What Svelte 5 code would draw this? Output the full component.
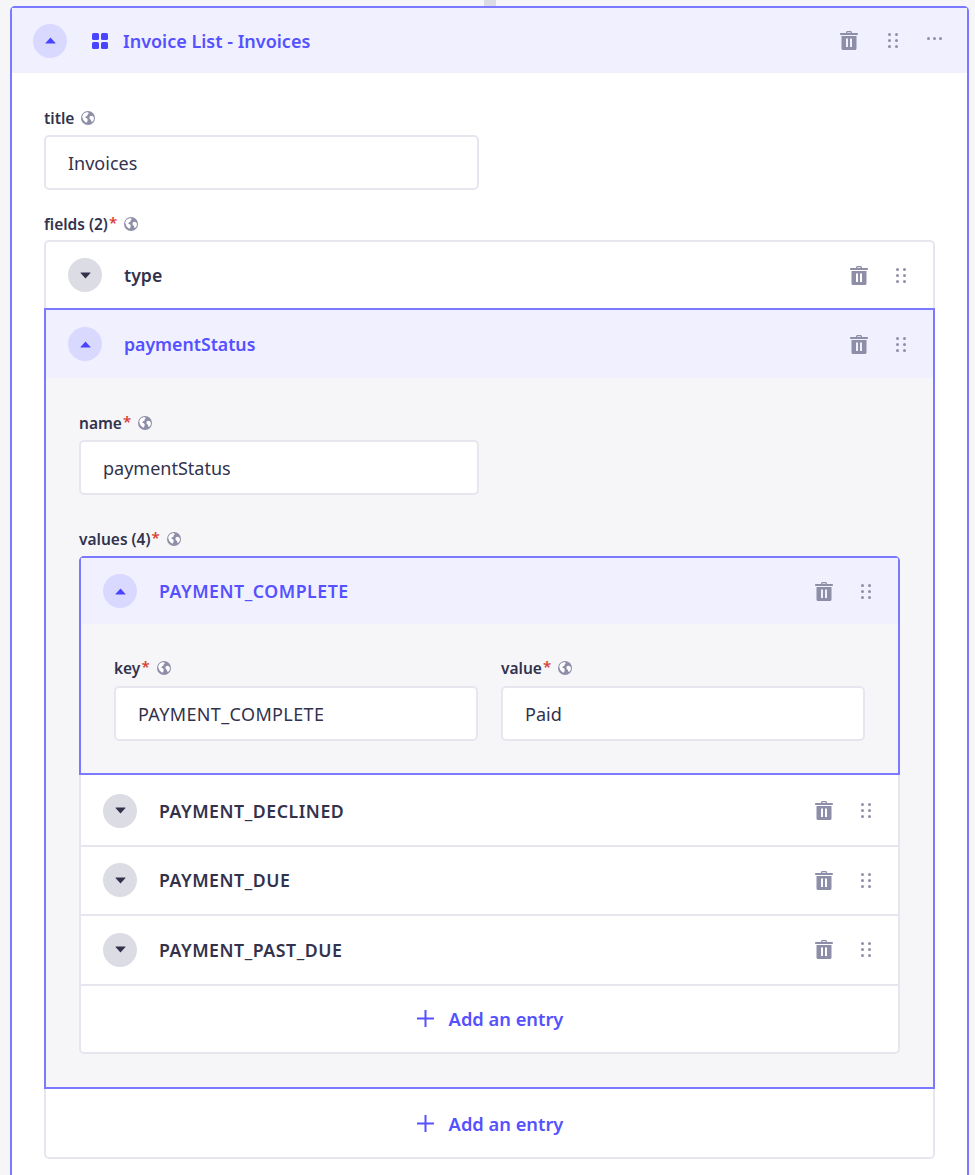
<script>
    let values = ['PAYMENT_DECLINED', 'PAYMENT_DUE', 'PAYMENT_PAST_DUE'];

    // enum keys read wider in the reference font
    const isCaps = (s) => s === s.toUpperCase();
</script>

{#snippet globe()}
    <svg class="globe" viewBox="0 0 24 24">
        <circle cx="12" cy="12" r="12" fill="#8e8ea9"/>
        <path fill="#fff" d="M4 5c2-2 5-3.2 8-3l1.500 2-2 1.500-.5 2.500-3 1.500-.5 2 2.500 1 1.500 2-.5 3.500-2 2C6 18.500 3.500 16 3 13l-1-3c.3-1.800 1-3.500 2-5zM15 9l4-1 3 2.500c.3 2.500-.3 5-1.500 7L18 19l-1-3.500-2.500-2.500z"/>
    </svg>
{/snippet}

{#snippet caret(open)}
    <span class="toggle" class:open>
        <svg width="11" height="7" viewBox="0 0 11 7">
            {#if open}
                <path d="M5.500 0.500 L10.500 6 Q10.700 6.500 10 6.500 H1 Q0.300 6.500 0.500 6 Z"/>
            {:else}
                <path d="M5.500 6.500 L10.500 1 Q10.700 0.500 10 0.500 H1 Q0.300 0.500 0.500 1 Z"/>
            {/if}
        </svg>
    </span>
{/snippet}

{#snippet trash()}
    <svg class="trash" width="18" height="19" viewBox="0 0 18 19">
        <path fill-rule="evenodd" d="M6 1.500C6 .7 6.700 0 7.500 0h3c.8 0 1.500.7 1.500 1.500V2h5c.6 0 1 .4 1 1s-.4 1-1 1H1c-.6 0-1-.4-1-1s.4-1 1-1h5zM7.300 2h3.400v-.7H7.300zM1.500 5h15v12.500c0 .8-.7 1.500-1.500 1.500H3c-.8 0-1.500-.7-1.500-1.500zM6 7.500v8.500h2V7.500zM10 7.500v8.500h2V7.500z"/>
    </svg>
{/snippet}

{#snippet drag()}
    <svg class="drag" width="10" height="15" viewBox="0 0 10 15">
        {#each [1.500, 7.500, 13.500] as y}
            <circle cx="1.500" cy={y} r="1.500"/>
            <circle cx="8.500" cy={y} r="1.500"/>
        {/each}
    </svg>
{/snippet}

{#snippet actions()}
    <span class="actions">
        {@render trash()}
        {@render drag()}
    </span>
{/snippet}

{#snippet label(text, required)}
    <div class="label">
        <span>{text}</span>{#if required}<span class="star">*</span>{/if}
        {@render globe()}
    </div>
{/snippet}

{#snippet field(name, value, required)}
    <div class="field">
        {@render label(name, required)}
        <div class="input" class:caps={isCaps(value)}>{value}</div>
    </div>
{/snippet}

{#snippet addEntry()}
    <div class="add">
        <svg width="19" height="19" viewBox="0 0 19 19">
            <path d="M9.500 1v17M1 9.500h17" stroke="#5551ff" stroke-width="2" fill="none"/>
        </svg>
        <span>Add an entry</span>
    </div>
{/snippet}

<div class="page">
    <div class="connector"></div>
    <section class="card">
        <header class="card-head">
            {@render caret(true)}
            <svg class="blocks" width="16" height="16" viewBox="0 0 16 16">
                <rect x="0" y="0" width="7" height="7" rx="1.500"/>
                <rect x="9" y="0" width="7" height="7" rx="1.500"/>
                <rect x="0" y="9" width="7" height="7" rx="1.500"/>
                <rect x="9" y="9" width="7" height="7" rx="1.500"/>
            </svg>
            <span class="card-title">Invoice List - Invoices</span>
            <span class="actions card-actions">
                {@render trash()}
                {@render drag()}
                <svg class="more" width="15" height="3" viewBox="0 0 15 3">
                    <circle cx="1.500" cy="1.500" r="1.500"/>
                    <circle cx="7.500" cy="1.500" r="1.500"/>
                    <circle cx="13.500" cy="1.500" r="1.500"/>
                </svg>
            </span>
        </header>

        <div class="card-body">
            <div class="cols">
                {@render field('title', 'Invoices', false)}
            </div>

            <div class="group">
                {@render label('fields (2)', true)}
                <div class="list outer">
                    <div class="row">
                        {@render caret(false)}
                        <span class="row-name">type</span>
                        {@render actions()}
                    </div>

                    <div class="active">
                        <div class="row head">
                            {@render caret(true)}
                            <span class="row-name">paymentStatus</span>
                            {@render actions()}
                        </div>
                        <div class="active-body">
                            <div class="cols">
                                {@render field('name', 'paymentStatus', true)}
                            </div>
                            <div class="group nested">
                                {@render label('values (4)', true)}
                                <div class="list inner">
                                    <div class="active first">
                                        <div class="row head">
                                            {@render caret(true)}
                                            <span class="row-name caps">PAYMENT_COMPLETE</span>
                                            {@render actions()}
                                        </div>
                                        <div class="entry-body cols">
                                            {@render field('key', 'PAYMENT_COMPLETE', true)}
                                            {@render field('value', 'Paid', true)}
                                        </div>
                                    </div>
                                    {#each values as value}
                                        <div class="row ruled">
                                            {@render caret(false)}
                                            <span class="row-name caps">{value}</span>
                                            {@render actions()}
                                        </div>
                                    {/each}
                                    {@render addEntry()}
                                </div>
                            </div>
                        </div>
                    </div>

                    {@render addEntry()}
                </div>
            </div>
        </div>
    </section>
</div>

<style>
    :global(body) {
        background: #f6f6f9;
    }

    .page {
        width: 975px;
        height: 1175px;
        overflow: hidden;
        box-sizing: border-box;
        padding-left: 10px;
        font-family: "Noto Sans", sans-serif;
        color: #32324d;
    }

    .connector {
        width: 12px;
        height: 6px;
        margin-left: 474px;
        background: #dcdce4;
    }

    .card {
        width: 959px;
        box-sizing: border-box;
        background: #fff;
        border: 2px solid #7b79ff;
        border-radius: 5px;
    }

    .card-head {
        display: flex;
        align-items: center;
        height: 65px;
        padding-left: 21px;
        background: #f0f0ff;
    }

    .toggle {
        display: flex;
        align-items: center;
        justify-content: center;
        flex-shrink: 0;
        width: 34px;
        height: 34px;
        border-radius: 50%;
        background: #dcdce4;
    }

    .toggle svg {
        fill: #32324d;
    }

    .toggle.open {
        background: #d9d8ff;
    }

    .toggle.open svg {
        fill: #4945ff;
    }

    .blocks {
        margin-left: 25px;
        fill: #4945ff;
    }

    .card-title {
        margin-left: 15px;
        font-size: 18px;
        font-weight: 600;
        color: #5551ff;
    }

    .actions {
        display: flex;
        align-items: center;
        gap: 28px;
        margin-left: auto;
        padding-right: 27px;
    }

    .card-actions {
        gap: 29.500px;
        padding-right: 25px;
    }

    .trash,
    .drag,
    .more {
        fill: #8e8ea9;
    }

    .more {
        margin-bottom: 5px;
    }

    .card-body {
        padding: 35px 32px 40px;
    }

    .cols {
        display: grid;
        grid-template-columns: 1fr 1fr;
        column-gap: 22px;
    }

    .group {
        margin-top: 24px;
    }

    .group.nested {
        margin-top: 34px;
    }

    .label {
        display: flex;
        align-items: center;
        height: 20px;
        margin-bottom: 7px;
        font-size: 15.500px;
        font-weight: 600;
    }

    .star {
        align-self: flex-start;
        color: #d9402f;
        font-size: 15px;
        line-height: 17px;
        margin-left: 1px;
    }

    .globe {
        width: 14px;
        height: 14px;
        margin-left: 7px;
    }

    .input {
        display: flex;
        align-items: center;
        height: 55px;
        box-sizing: border-box;
        padding-left: 22px;
        background: #fff;
        border: 2px solid #e6e6ee;
        border-radius: 5px;
        font-size: 18px;
    }

    .input.caps {
        letter-spacing: 0.370px;
    }

    .list {
        background: #fff;
        border: 2px solid #e6e6ee;
        border-radius: 5px;
    }

    .list.outer {
        margin-top: -1px;
    }

    .row {
        display: flex;
        align-items: center;
        height: 66px;
        padding-left: 22px;
    }

    .row.ruled {
        height: 69.500px;
        box-sizing: border-box;
        border-bottom: 2px solid #e6e6ee;
    }

    .row-name {
        margin-left: 22px;
        font-size: 17.700px;
        font-weight: 600;
    }

    .row-name.caps {
        letter-spacing: 0.550px;
    }

    .head {
        height: 68px;
        background: #f0f0ff;
    }

    .head .row-name {
        color: #5551ff;
    }

    .active {
        margin: 0 -2px;
        border: 2px solid #7b79ff;
        background: #f6f6f9;
    }

    .active.first {
        margin-top: -2px;
        margin-bottom: 2px;
        border-radius: 5px 5px 0 0;
    }

    .first .head {
        height: 66px;
    }

    .active-body {
        padding: 35px 33px 33px;
    }

    .entry-body {
        padding: 34px 33px 32px;
        column-gap: 23px;
    }

    .entry-body .label {
        margin-bottom: 8px;
    }

    .add {
        display: flex;
        align-items: center;
        justify-content: center;
        gap: 14px;
        height: 68px;
        color: #5551ff;
        font-size: 18.300px;
        font-weight: 600;
    }

    .inner .add {
        height: 66.500px;
    }
</style>
